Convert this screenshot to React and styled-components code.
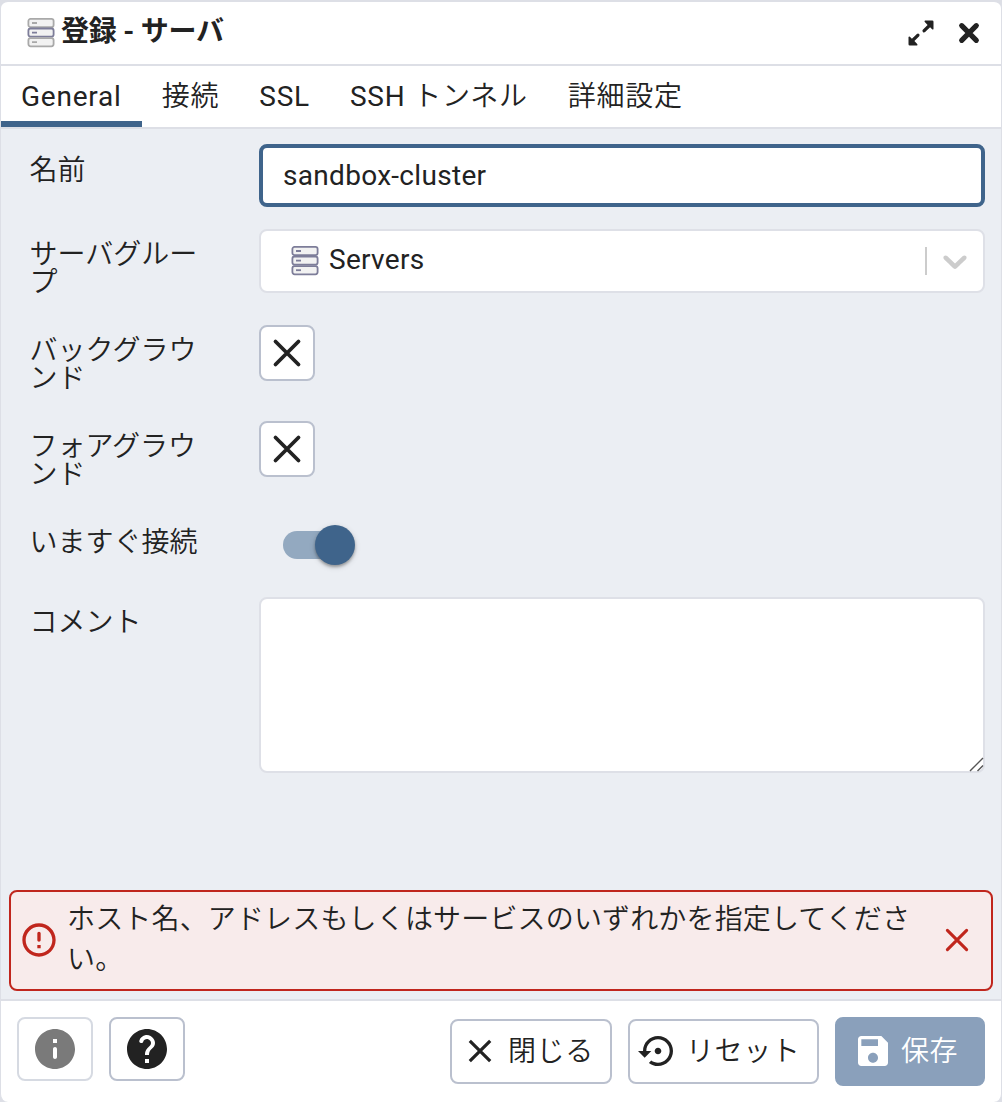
import React from "react";
import styled, { createGlobalStyle, css } from "styled-components";

const GlobalStyle = createGlobalStyle`
  *, *::before, *::after { box-sizing: border-box; }
  body {
    margin: 0;
    background: #dddfe6;
    color: #222;
    font-family: Roboto, "Noto Sans CJK JP", sans-serif;
    font-size: 28px;
    line-height: 1;
  }
  button, input, textarea { font: inherit; color: inherit; margin: 0; }
`;

const Dialog = styled.div`
  display: flex;
  flex-direction: column;
  width: 1002px;
  height: 1102px;
  border: solid #dddfe6;
  border-width: 2px 1px 0;
  border-radius: 8px;
  background: #fff;
  overflow: hidden;
`;

const Header = styled.header`
  display: flex;
  align-items: center;
  flex: 0 0 64px;
  padding: 0 18px 0 25px;
  border-bottom: 2px solid #dddfe6;
`;

const Title = styled.h1`
  flex: 1;
  margin: 0 0 3px 5px;
  font-size: 28px;
  font-weight: 700;
  line-height: 40px;
  letter-spacing: -0.25px;
`;

const HeaderButton = styled.button`
  display: flex;
  padding: 0;
  margin-left: ${(p) => p.$gap || 0}px;
  border: 0;
  background: none;
`;

const Tabs = styled.nav`
  display: flex;
  flex: 0 0 63px;
  border-bottom: 2px solid #dddfe6;
`;

const Tab = styled.button`
  padding: 7px 20px 0;
  border: 0;
  border-bottom: 6px solid ${(p) => (p.$active ? "#3f648b" : "transparent")};
  background: none;
  line-height: 40px;
  letter-spacing: 0.78px;
  white-space: nowrap;
`;

const Thin = styled.span`
  font-weight: 350;
`;

const Body = styled.main`
  display: flex;
  flex-direction: column;
  flex: 1;
  padding: 15px 8px 8px;
  background: #ebeef3;
`;

const Form = styled.form`
  display: flex;
  flex-direction: column;
  flex: 1;
  padding: 0 8px 0 20px;
`;

const Row = styled.div`
  display: flex;
  height: ${(p) => p.$height}px;
`;

const Label = styled.label`
  flex: 0 0 230px;
  padding: ${(p) => p.$top}px 54px 0 0.5px;
  line-height: 28px;
  font-weight: 350;
`;

const TextInput = styled.input`
  width: 726px;
  height: 63px;
  padding: 0 20px;
  border: 4px solid #3f648b;
  border-radius: 8px;
  background: #fff;
  outline: none;
  letter-spacing: 0.3px;
`;

const Select = styled.div`
  display: flex;
  align-items: center;
  width: 726px;
  height: 64px;
  padding: 0 8px 0 29px;
  border: 2px solid #dee0e7;
  border-radius: 8px;
  background: #fff;
`;

const SelectValue = styled.span`
  flex: 1;
  margin: 0 0 3px 9px;
  letter-spacing: 0.3px;
`;

const Separator = styled.span`
  width: 2px;
  height: 28px;
  margin-right: 8px;
  background: #ccc;
`;

const outlined = css`
  display: flex;
  align-items: center;
  border: 2px solid #bac0ce;
  border-radius: 8px;
  background: #fff;
`;

const ColorButton = styled.button`
  ${outlined}
  justify-content: center;
  width: 56px;
  height: 56px;
  padding: 0;
`;

const SwitchTrack = styled.div`
  display: flex;
  align-items: center;
  justify-content: flex-end;
  width: 68px;
  height: 28px;
  margin: 14px 0 0 24px;
  border-radius: 14px;
  background: #93a9c0;
`;

const SwitchThumb = styled.span`
  flex: none;
  width: 40px;
  height: 40px;
  margin-right: -4px;
  border-radius: 50%;
  background: #3f648b;
  box-shadow: 0 2px 3px rgba(0, 0, 0, 0.3), 0 2px 6px rgba(0, 0, 0, 0.14);
`;

const CommentWrap = styled.div`
  position: relative;
  width: 726px;
  height: 176px;
`;

const Comment = styled.textarea`
  display: block;
  width: 100%;
  height: 100%;
  padding: 16px 22px;
  border: 2px solid #dee0e7;
  border-radius: 8px;
  background: #fff;
  resize: none;
  outline: none;
`;

const Grip = styled.svg`
  position: absolute;
  right: 0;
  bottom: 1px;
`;

const Alert = styled.div`
  display: flex;
  align-items: center;
  height: 101px;
  padding: 0 14px 1px 8px;
  border: 2px solid #c0261d;
  border-radius: 8px;
  background: #f8ebeb;
  color: #c0261d;
`;

const AlertText = styled.div`
  flex: 1;
  margin: 0 16px 0 8px;
  color: #222;
  font-weight: 350;
  line-height: 40px;
  letter-spacing: 0.16px;
`;

const Footer = styled.footer`
  display: flex;
  align-items: center;
  flex: 0 0 103px;
  padding: 0 16px;
  border-top: 2px solid #dddfe6;
`;

const IconButton = styled.button`
  ${outlined}
  justify-content: center;
  width: 76px;
  height: 64px;
  margin: 0 16px 5px 0;
  padding: 0;
  border-color: ${(p) => (p.disabled ? "#d6dae2" : "#bac0ce")};
  color: ${(p) => (p.disabled ? "#7a7a7a" : "#222")};
`;

const Spacer = styled.div`
  flex: 1;
`;

const ActionButton = styled.button`
  ${outlined}
  width: ${(p) => p.$width}px;
  height: 65px;
  margin-left: 16px;
  padding: 0 0 1px 8px;
  gap: 8px;
  font-weight: 350;
  line-height: 30px;
  letter-spacing: 0.6px;
  white-space: nowrap;
  ${(p) =>
    p.$primary &&
    css`
      height: 69px;
      padding-left: 16px;
      border-color: #8aa0bb;
      background: #8aa0bb;
      color: #fff;
    `}
`;

const ActionLabel = styled.span`
  padding-top: 2px;
`;

const ServerIcon = ({ muted }) => (
  <svg width="30" height="30" viewBox="0 0 30 30">
    {[0.9, 10.5, 20.1].map((y, i) => {
      const color = muted && i !== 1 ? "#a9a9a9" : "#7d7d99";
      return (
        <g key={y} stroke={color} fill="#f2f2f2">
          <rect x="2.4" y={y} width="25.2" height="8.2" rx="2.2" strokeWidth="1.8" />
          <path d={`M6 ${y + 4.1}h5`} strokeWidth="1.8" />
        </g>
      );
    })}
  </svg>
);

const Cross = ({ size, inset, stroke, cap = "round" }) => (
  <svg width={size} height={size} fill="none" stroke="currentColor" strokeWidth={stroke} strokeLinecap={cap}>
    <path d={`M${inset} ${inset}L${size - inset} ${size - inset}M${size - inset} ${inset}L${inset} ${size - inset}`} />
  </svg>
);

const ExpandIcon = () => (
  <svg width="26" height="26" viewBox="0 0 26 26" fill="#222">
    <path id="arrow" d="M17 .5h7.2q1.3 0 1.3 1.3V9q-.5 1-1.4.3l-2-2-5 4.8q-1.2.9-2.2-.1-1-1.1-.1-2.2l4.8-4.9-2.8-2.8Q16 1 17 .5z" />
    <use href="#arrow" transform="rotate(180 13 13)" />
  </svg>
);

const Icon = ({ size, d }) => (
  <svg width={size} height={size} viewBox="0 0 24 24" fill="currentColor">
    <path d={d} />
  </svg>
);

const ICONS = {
  info: "M12 2C6.48 2 2 6.48 2 12s4.48 10 10 10 10-4.48 10-10S17.52 2 12 2zm0 15c-.55 0-1-.45-1-1v-4c0-.55.45-1 1-1s1 .45 1 1v4c0 .55-.45 1-1 1zm1-8h-2V7h2v2z",
  help: "M12 2C6.48 2 2 6.48 2 12s4.48 10 10 10 10-4.48 10-10S17.52 2 12 2zm1 17h-2v-2h2v2zm2.07-7.75l-.9.92c-.5.51-.86.97-1.04 1.69-.08.32-.13.68-.13 1.14h-2v-.5c0-.46.08-.9.22-1.31.2-.58.53-1.1.95-1.52l1.24-1.26c.46-.44.68-1.1.55-1.8-.13-.72-.69-1.33-1.39-1.53-1.11-.31-2.14.32-2.47 1.27-.12.37-.43.65-.82.65h-.3C8.4 9 8 8.44 8.16 7.88c.43-1.47 1.68-2.59 3.23-2.83 1.52-.24 2.97.55 3.87 1.8 1.18 1.63.83 3.38-.19 4.4z",
  error: "M12 7c.55 0 1 .45 1 1v4c0 .55-.45 1-1 1s-1-.45-1-1V8c0-.55.45-1 1-1zm-.01-5C6.47 2 2 6.48 2 12s4.47 10 9.99 10C17.52 22 22 17.52 22 12S17.52 2 11.99 2zM12 20c-4.42 0-8-3.58-8-8s3.58-8 8-8 8 3.58 8 8-3.58 8-8 8zm1-3h-2v-2h2v2z",
  reset: "M14 12c0-1.1-.9-2-2-2s-2 .9-2 2 .9 2 2 2 2-.9 2-2zm-2-9c-4.97 0-9 4.03-9 9H0l4 4 4-4H5c0-3.87 3.13-7 7-7s7 3.13 7 7-3.13 7-7 7c-1.51 0-2.91-.49-4.06-1.3l-1.42 1.44C8.04 20.3 9.94 21 12 21c4.97 0 9-4.03 9-9s-4.03-9-9-9z",
  save: "M17 3H5c-1.11 0-2 .9-2 2v14c0 1.1.89 2 2 2h14c1.1 0 2-.9 2-2V7l-4-4zm-5 16c-1.66 0-3-1.34-3-3s1.34-3 3-3 3 1.34 3 3-1.34 3-3 3zm3-10H5V5h10v4z",
};

const Chevron = () => (
  <svg width="40" height="40" viewBox="0 0 20 20" fill="#ccc">
    <path d="M4.516 7.548c.436-.446 1.043-.481 1.576 0L10 11.295l3.908-3.747c.533-.481 1.141-.446 1.574 0 .436.445.408 1.197 0 1.615-.406.418-4.695 4.502-4.695 4.502-.217.223-.502.335-.787.335s-.57-.112-.789-.335c0 0-4.287-4.084-4.695-4.502s-.436-1.17 0-1.615z" />
  </svg>
);

export default function App() {
  return (
    <>
      <GlobalStyle />
      <Dialog>
        <Header>
          <ServerIcon muted />
          <Title>登録 - サーバ</Title>
          <HeaderButton><ExpandIcon /></HeaderButton>
          <HeaderButton $gap={21}><Cross size={28} inset={6.7} stroke={5.2} /></HeaderButton>
        </Header>
        <Tabs>
          <Tab $active>General</Tab>
          <Tab><Thin>接続</Thin></Tab>
          <Tab>SSL</Tab>
          <Tab>SSH <Thin>トンネル</Thin></Tab>
          <Tab><Thin>詳細設定</Thin></Tab>
        </Tabs>
        <Body>
          <Form>
            <Row $height={85}>
              <Label $top={13}>名前</Label>
              <TextInput defaultValue="sandbox-cluster" />
            </Row>
            <Row $height={96}>
              <Label $top={12}>サーバグループ</Label>
              <Select>
                <ServerIcon />
                <SelectValue>Servers</SelectValue>
                <Separator />
                <Chevron />
              </Select>
            </Row>
            <Row $height={96}>
              <Label $top={12}>バックグラウンド</Label>
              <ColorButton type="button"><Cross size={30} inset={3.5} stroke={3.8} /></ColorButton>
            </Row>
            <Row $height={96}>
              <Label $top={12}>フォアグラウンド</Label>
              <ColorButton type="button"><Cross size={30} inset={3.5} stroke={3.8} /></ColorButton>
            </Row>
            <Row $height={80}>
              <Label $top={12}>いますぐ接続</Label>
              <SwitchTrack><SwitchThumb /></SwitchTrack>
            </Row>
            <Row $height={176}>
              <Label $top={12}>コメント</Label>
              <CommentWrap>
                <Comment />
                <Grip width="16" height="16" stroke="#555" strokeWidth="1.4">
                  <path d="M1 15L14 2M8.500 15L14 9.500" />
                </Grip>
              </CommentWrap>
            </Row>
          </Form>
          <Alert>
            <Icon size={40} d={ICONS.error} />
            <AlertText>ホスト名、アドレスもしくはサービスのいずれかを指定してください。</AlertText>
            <Cross size={40} inset={10.4} stroke={3.1} />
          </Alert>
        </Body>
        <Footer>
          <IconButton disabled><Icon size={48} d={ICONS.info} /></IconButton>
          <IconButton><Icon size={48} d={ICONS.help} /></IconButton>
          <Spacer />
          <ActionButton $width={162}>
            <Cross size={40} inset={9.8} stroke={3.2} cap="butt" />
            <ActionLabel>閉じる</ActionLabel>
          </ActionButton>
          <ActionButton $width={191}>
            <Icon size={40} d={ICONS.reset} />
            <ActionLabel>リセット</ActionLabel>
          </ActionButton>
          <ActionButton $width={150} $primary>
            <Icon size={40} d={ICONS.save} />
            <ActionLabel>保存</ActionLabel>
          </ActionButton>
        </Footer>
      </Dialog>
    </>
  );
}
